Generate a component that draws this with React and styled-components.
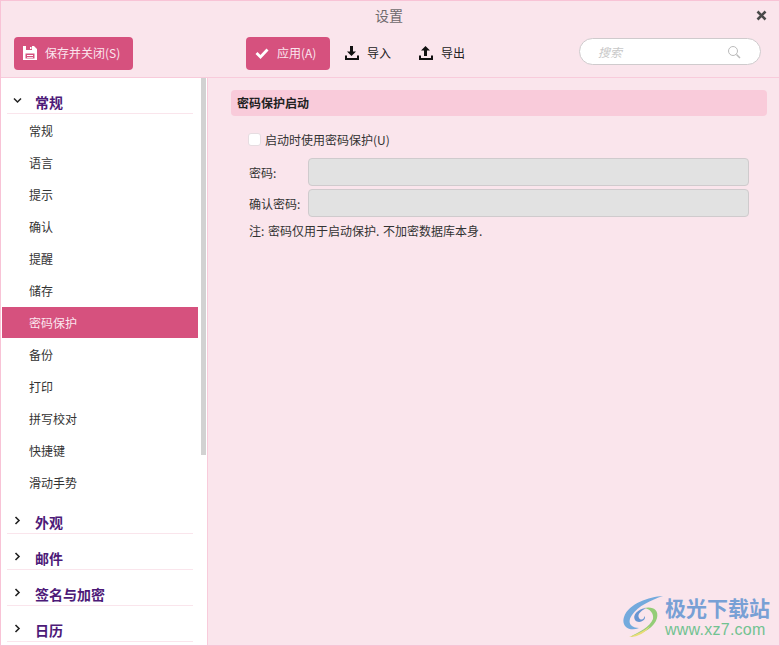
import React from "react";
import styled, { createGlobalStyle } from "styled-components";

const Global = createGlobalStyle`
  html, body { margin: 0; padding: 0; }
  body { width: 780px; height: 646px; overflow: hidden; font-family: "Noto Sans CJK SC", "Liberation Sans", sans-serif; }
  * { box-sizing: border-box; }
`;
const Window = styled.div`
  position: relative; width: 780px; height: 646px; background: #fae5ec;
  border: 1px solid #f8c3d6; display: flex; flex-direction: column; overflow: hidden;
`;
const Header = styled.header`
  height: 77px; flex: none; border-bottom: 1px solid #f8cbdb; display: flex; flex-direction: column;
`;
const TitleBar = styled.div`
  height: 36px; position: relative; display: flex; align-items: center; justify-content: center;
  padding: 0 2px 8px 0; font-size: 14px; color: #6e6a6c;
`;
const Close = styled.svg`
  position: absolute; right: 12px; top: 9px; width: 11px; height: 11px;
`;
const Toolbar = styled.div`
  height: 33px; display: flex; align-items: center; padding: 0 18px 0 13px;
`;
const Primary = styled.button`
  height: 33px; width: ${p => p.$w}px; margin-right: ${p => p.$mr || 0}px; display: flex; align-items: center; gap: 7px; padding: 0 0 2px 8px;
  background: #d6517e; border: 0; border-radius: 4px; color: #fbe6ee; font: 12px "Noto Sans CJK SC", "Liberation Sans", sans-serif;
`;
const Plain = styled.button`
  height: 33px; display: flex; align-items: center; gap: 7px; padding: 0 0 2px; margin-left: ${p => p.$ml}px;
  background: none; border: 0; color: #222; font: 12px "Noto Sans CJK SC", "Liberation Sans", sans-serif;
`;
const Search = styled.div`
  margin-left: auto; align-self: flex-start; margin-top: 1px; width: 182px; height: 27px; background: #fff; border: 1px solid #cfcbcd; border-radius: 14px;
  display: flex; align-items: center; justify-content: space-between; padding: 0 19px 0 18px;
  font: italic 12px "Noto Sans CJK SC", sans-serif; color: #c8c8c8;
`;
const Main = styled.main`
  flex: 1; display: flex; min-height: 0;
`;
const Sidebar = styled.nav`
  position: relative; width: 207px; flex: none; background: #fff; border-right: 1px solid #f8cbdb; overflow: hidden; padding-top: 13px;
`;
const Thumb = styled.div`
  position: absolute; left: 200px; top: 0; width: 5px; height: 377px; background: #d2d2d2;
`;
const Group = styled.div`
  height: 23px; margin: ${p => p.$top}px 0 0 6px; width: 186px; border-bottom: 1px solid #fae5ec;
  display: flex; align-items: center; gap: 13px; padding: 0 0 1px 6px;
  font-size: 14px; font-weight: 700; color: #4d1a78;
`;
const Chevron = styled.svg`
  width: 9px; height: 9px; flex: none; margin-top: -2px;
`;
const Item = styled.div`
  height: 31px; width: 196px; margin: 1px 0 0 1px; padding-left: 27px; display: flex; align-items: center; font-size: 12px;
  color: ${p => (p.$active ? "#fbe6ee" : "#333")}; background: ${p => (p.$active ? "#d6517e" : "transparent")};
`;
const Content = styled.section`
  flex: 1; padding: 12px 12px 0 23px; font-size: 12px; color: #333;
`;
const SectionTitle = styled.div`
  height: 26px; background: #f9cbda; border-radius: 4px; padding: 0 0 2px 6px; display: flex; align-items: center;
  font-size: 12px; font-weight: 700; color: #222;
`;
const CheckRow = styled.label`
  display: flex; align-items: center; gap: 4px; margin: 13px 0 0 17px; height: 20px;
`;
const Box = styled.span`
  width: 13px; height: 13px; background: #fff; border: 1px solid #e6dde1; border-radius: 3px;
`;
const FieldRow = styled.div`
  display: flex; align-items: center; margin: ${p => p.$top}px 18px 0 18px; height: 28px;
`;
const FieldLabel = styled.span`
  width: 59px; flex: none; padding-top: ${p => p.$drop || 0}px;
`;
const Field = styled.div`
  flex: 1; height: 28px; background: #e2e2e2; border: 1px solid #cfcbcd; border-radius: 4px;
`;
const Note = styled.p`
  margin: 5px 0 0 18px; font-size: 12px; line-height: 17px; word-spacing: 1px;
`;
const Watermark = styled.div`
  position: absolute; right: 9px; bottom: 7px; display: flex; align-items: flex-end; gap: 0; opacity: .92;
`;
const MarkText = styled.div`
  display: flex; flex-direction: column;
`;
const MarkCn = styled.span`
  font-size: 21px; font-weight: 700; color: #6d9bd4; line-height: 30px;
`;
const MarkUrl = styled.span`
  font: 16px/16px "Liberation Sans", sans-serif; color: #67c08a; letter-spacing: .25px; white-space: nowrap;
`;

const Ic = ({ children }) => <svg width="16" height="16" viewBox="0 0 16 16">{children}</svg>;
const items = ["常规", "语言", "提示", "确认", "提醒", "储存", "密码保护", "备份", "打印", "拼写校对", "快捷键", "滑动手势"];
const Down = () => <Chevron viewBox="0 0 9 9"><path d="M1 2.500 4.500 6 8 2.500" fill="none" stroke="#222" strokeWidth="1.500" /></Chevron>;
const Right = () => <Chevron viewBox="0 0 9 9"><path d="M2.500 1 6 4.500 2.500 8" fill="none" stroke="#222" strokeWidth="1.600" /></Chevron>;

export default function App() {
  return (
    <Window>
      <Global />
      <Header>
        <TitleBar>
          设置
          <Close viewBox="0 0 11 11"><path d="M1.500 1.500 9.500 9.500M9.500 1.500 1.500 9.500" stroke="#4a4a4a" strokeWidth="2.600" /></Close>
        </TitleBar>
        <Toolbar>
          <Primary $w={119} $mr={113}>
            <Ic><path fillRule="evenodd" fill="#fff" d="M1 1h11l3 3v11H1zM4 1v4h6V1zM8 2h1.500v2H8zM3.500 8.500v5h9v-5zM5 10h6v1H5zM5 12h6v.8H5z" /></Ic>
            保存并关闭(S)
          </Primary>
          <Primary $w={84}>
            <Ic><path d="M2.500 8 6.500 12 13.500 4.500" fill="none" stroke="#fff" strokeWidth="2.800" /></Ic>
            应用(A)
          </Primary>
          <Plain $ml={14}>
            <Ic><path fill="#111" d="M6 1h3v5.500h3L7.500 11 3 6.500h3zM1 10.500h2V13h10v-2.500h2V15H1z" /></Ic>
            导入
          </Plain>
          <Plain $ml={27}>
            <Ic><path fill="#111" d="M7.500 1 12 5.500H9V11H6V5.500H3zM1 10.500h2V13h10v-2.500h2V15H1z" /></Ic>
            导出
          </Plain>
          <Search>
            搜索
            <svg width="14" height="14" viewBox="0 0 14 14"><circle cx="6" cy="6" r="4.500" fill="none" stroke="#bbb" /><path d="M9.500 9.500 13 13" stroke="#bbb" strokeWidth="1.500" /></svg>
          </Search>
        </Toolbar>
      </Header>
      <Main>
        <Sidebar>
          <Thumb />
          <Group $top={0}><Down />常规</Group>
          {items.map(t => <Item key={t} $active={t === "密码保护"}>{t}</Item>)}
          <Group $top={13}><Right />外观</Group>
          <Group $top={13}><Right />邮件</Group>
          <Group $top={13}><Right />签名与加密</Group>
          <Group $top={13}><Right />日历</Group>
        </Sidebar>
        <Content>
          <SectionTitle>密码保护启动</SectionTitle>
          <CheckRow><Box />启动时使用密码保护(U)</CheckRow>
          <FieldRow $top={9}><FieldLabel>密码:</FieldLabel><Field /></FieldRow>
          <FieldRow $top={3}><FieldLabel $drop={1}>确认密码:</FieldLabel><Field /></FieldRow>
          <Note>注: 密码仅用于启动保护. 不加密数据库本身.</Note>
        </Content>
      </Main>
      <Watermark>
        <svg width="43" height="42" viewBox="0 0 43 42">
          <path d="M41 0C27 1 7 7 2 21c-3 9 5 15 15 11C8 32 5 26 10 19 16 10 29 4 41 0z" fill="#68a5dc" />
          <path d="M13 24c-3-5 3-11 11-12-5 3-9 6-7 10 2 3 6 1 5-2 4 3-5 9-9 4z" fill="#5b8fd0" />
          <path d="M22 12c9-2 15 2 13 10-2 9-14 16-27 19 9-5 20-10 23-18 1-6-3-10-9-11z" fill="#8ccb6e" />
          <path d="M7 41c8-3 15-6 21-11-4 6-11 11-21 11z" fill="#e8dc6c" />
        </svg>
        <MarkText>
          <MarkCn>极光下载站</MarkCn>
          <MarkUrl>www.xz7.com</MarkUrl>
        </MarkText>
      </Watermark>
    </Window>
  );
}
